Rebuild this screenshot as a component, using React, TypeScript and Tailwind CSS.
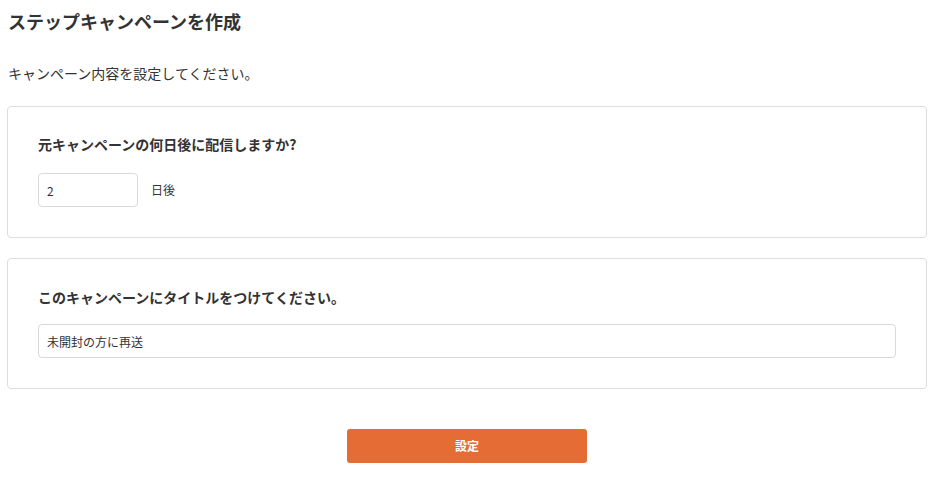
import React from "react";

export default function App() {
  return (
    <div
      className="min-h-[479px] bg-white pl-[7px] pr-[5px] text-[#333333]"
      style={{ fontFamily: '"Noto Sans CJK JP", "Noto Sans", sans-serif' }}
    >
      <h1 className="ml-px pt-[8px] text-[18px] font-bold leading-[27px]">ステップキャンペーンを作成</h1>
      <p className="ml-px mt-[28px] text-[14px] leading-[20px]">キャンペーン内容を設定してください。</p>

      <div className="mt-[23px] rounded border border-[#dddddd] px-[30px] pb-[30px] pt-[27px]">
        <h2 className="text-[14px] font-bold leading-[20px]">元キャンペーンの何日後に配信しますか?</h2>
        <div className="mt-[19px] flex items-center gap-[13px]">
          <input
            type="text"
            defaultValue="2"
            className="h-[34px] w-[100px] rounded border border-[#d9d9d9] px-[8px] text-[12px] text-[#333333] outline-none"
          />
          <span className="text-[12px]">日後</span>
        </div>
      </div>

      <div className="mt-[20px] rounded border border-[#dddddd] px-[30px] pb-[30px] pt-[28px]">
        <h2 className="text-[14px] font-bold leading-[20px]">このキャンペーンにタイトルをつけてください。</h2>
        <input
          type="text"
          defaultValue="未開封の方に再送"
          className="mt-[17px] block h-[34px] w-full rounded border border-[#d9d9d9] px-[8px] text-[12px] text-[#333333] outline-none"
        />
      </div>

      <div className="mt-[40px] flex justify-center">
        <button className="h-[34px] w-[240px] rounded-[3px] bg-[#e66c35] text-[12px] font-bold text-white">
          設定
        </button>
      </div>
    </div>
  );
}
